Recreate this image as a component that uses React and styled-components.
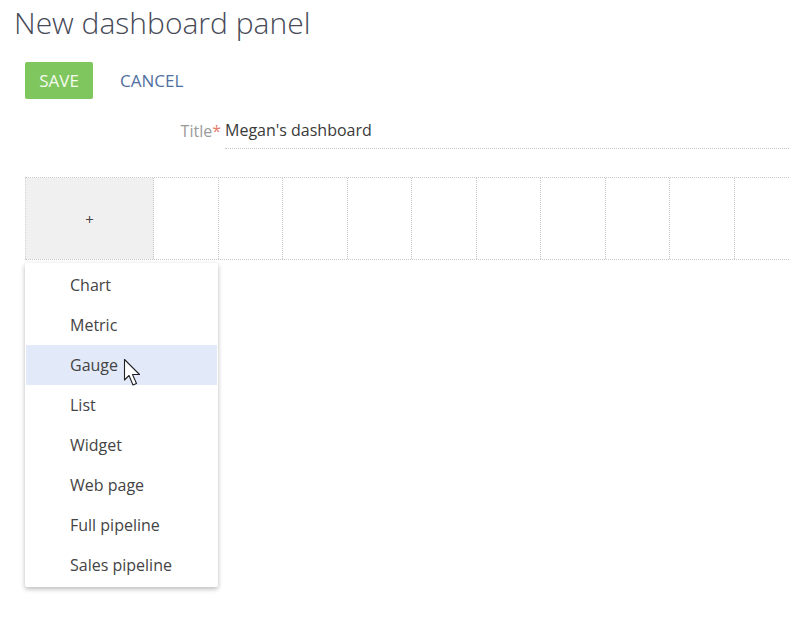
import styled, { createGlobalStyle } from 'styled-components';

const GlobalStyle = createGlobalStyle`
  body {
    margin: 0;
    background: #fff;
    font-family: "Open Sans", "Liberation Sans", sans-serif;
    overflow: hidden;
  }
`;

const Page = styled.div`
  width: 789px;
  height: 630px;
  overflow: hidden;
  padding: 0 0 0 25px;
  box-sizing: border-box;
`;

const Heading = styled.h1`
  margin: 0 0 0 -11px;
  padding-top: 2px;
  font-size: 30px;
  font-weight: 300;
  color: #474a57;
  line-height: 42px;
  letter-spacing: 0;
`;

const Toolbar = styled.div`
  display: flex;
  align-items: center;
  gap: 27px;
  margin-top: 18px;
`;

const Button = styled.button`
  font-family: inherit;
  font-size: 17px;
  height: 37px;
  padding: 0 ${(p) => (p.primary ? '12px' : '0')};
  min-width: ${(p) => (p.primary ? '68px' : '0')};
  border: none;
  border-radius: 2px;
  background: ${(p) => (p.primary ? '#80c65e' : 'transparent')};
  color: ${(p) => (p.primary ? '#f4fbef' : '#50709f')};
  cursor: pointer;
`;

const FieldRow = styled.div`
  display: flex;
  align-items: flex-end;
  margin-top: 13px;
`;

const Label = styled.div`
  width: 200px;
  padding-right: 4px;
  box-sizing: border-box;
  text-align: right;
  font-size: 16px;
  color: #9b9b9b;
  line-height: 36px;
`;

const Required = styled.span`
  color: #e57b6a;
`;

const Value = styled.div`
  flex: 1;
  font-size: 16px;
  color: #3a3a3a;
  line-height: 36px;
  border-bottom: 1px dotted #c6c6c6;
  margin-right: -10px;
`;

const Grid = styled.div`
  display: flex;
  margin-top: 28px;
  width: 900px;
  height: 83px;
  border-top: 1px dotted #c8c8c8;
  border-bottom: 1px dotted #c8c8c8;
  box-sizing: border-box;
`;

const Cell = styled.div`
  flex: 0 0 ${(p) => (p.wide ? '129px' : '64.5px')};
  box-sizing: border-box;
  border-right: 1px dotted #c8c8c8;
  border-left: ${(p) => (p.wide ? '1px dotted #d4d4d4' : 'none')};
  background: ${(p) => (p.wide ? '#f0f0f0' : '#fff')};
  display: flex;
  align-items: center;
  justify-content: center;
  font-size: 15px;
  color: #444;
`;

const Menu = styled.div`
  width: 193px;
  margin-top: 3px;
  padding: 2px 1px;
  box-sizing: border-box;
  background: #fff;
  box-shadow: 0 2px 5px rgba(0, 0, 0, 0.28);
  border-radius: 2px;
`;

const Item = styled.div`
  position: relative;
  height: 40px;
  line-height: 40px;
  padding-left: 44px;
  font-size: 16px;
  color: #444;
  background: ${(p) => (p.active ? '#e2eaf9' : 'transparent')};
`;

const Pointer = styled.svg`
  position: absolute;
  left: 97px;
  top: 13px;
`;

const items = [
  'Chart',
  'Metric',
  'Gauge',
  'List',
  'Widget',
  'Web page',
  'Full pipeline',
  'Sales pipeline',
];

export default function App() {
  return (
    <>
      <GlobalStyle />
      <Page>
        <Heading>New dashboard panel</Heading>
        <Toolbar>
          <Button primary>SAVE</Button>
          <Button>CANCEL</Button>
        </Toolbar>
        <FieldRow>
          <Label>
            Title<Required>*</Required>
          </Label>
          <Value>Megan's dashboard</Value>
        </FieldRow>
        <Grid>
          <Cell wide>+</Cell>
          {Array.from({ length: 12 }).map((_, i) => (
            <Cell key={i} />
          ))}
        </Grid>
        <Menu>
          {items.map((name) => (
            <Item key={name} active={name === 'Gauge'}>
              {name}
              {name === 'Gauge' && (
                <Pointer width="20" height="30" viewBox="0 0 20 30">
                  <path
                    d="M1.5 1.5 L1.5 22 L6 17.5 L10 27 L13.5 25.5 L9.5 16.5 L16.5 16.5 Z"
                    fill="#fff"
                    stroke="#222"
                    strokeWidth="1.1"
                    strokeLinejoin="round"
                  />
                </Pointer>
              )}
            </Item>
          ))}
        </Menu>
      </Page>
    </>
  );
}
